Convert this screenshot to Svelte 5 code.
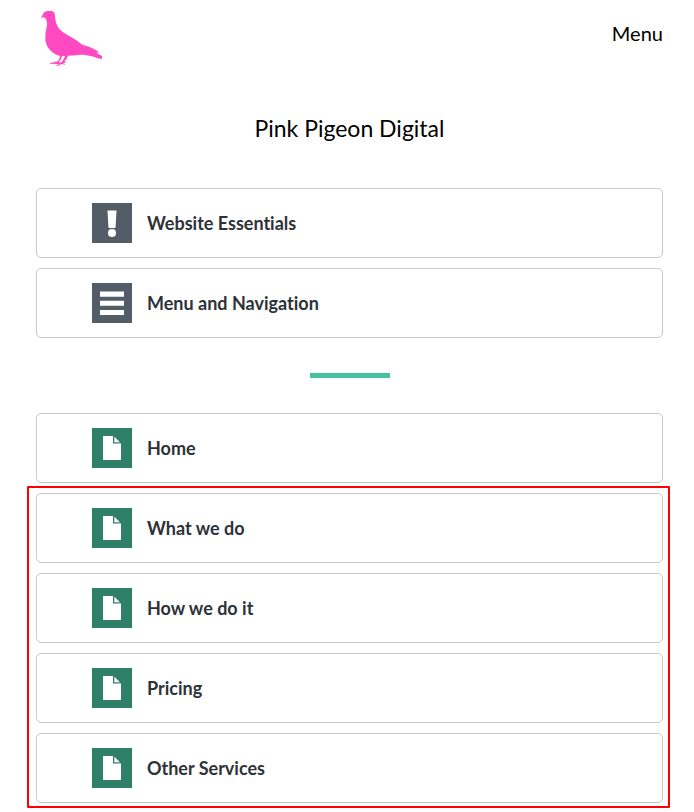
<script>
  const settings = [
    { label: 'Website Essentials', icon: 'alert' },
    { label: 'Menu and Navigation', icon: 'menu' }
  ];
  const home = [{ label: 'Home', icon: 'page' }];
  const pages = ['What we do', 'How we do it', 'Pricing', 'Other Services'].map((label) => ({
    label,
    icon: 'page'
  }));
</script>

{#snippet cards(items)}
  <ul>
    {#each items as item}
      <li>
        <a class="card" href="#top">
          <svg class="icon {item.icon}" viewBox="0 0 40 40" aria-hidden="true">
            {#if item.icon === 'alert'}
              <path d="M15.5 7.5h9L23.500 25h-7z" />
              <circle cx="20" cy="30" r="4" />
            {:else if item.icon === 'menu'}
              <path d="M8 8.500h24v5.200H8zM8 17.700h24v5H8zM8 27h24v5H8z" />
            {:else}
              <path d="M11.500 8H21v7.500h8V31.500q0 .5-.5.5h-17q-.5 0-.5-.5v-23q0-.5.5-.5z" />
              <path d="M22.300 8.700v5.500h5.700z" />
            {/if}
          </svg>
          <span>{item.label}</span>
        </a>
      </li>
    {/each}
  </ul>
{/snippet}

<div class="sheet" id="top">
  <header>
    <a class="logo" href="#top" aria-label="Pink Pigeon Digital">
      <svg viewBox="18 24 210 180" aria-hidden="true">
        <path
          d="M33 53 C36 48 37 47 39 43 C41 36 47 33 55 33 H65 C72 35 75 40 75 48 C76 61 78 72 84 81 C91 92 104 101 119 109 C132 116 143 123 151 130 C158 136 168 138 177 140 L196 149 L208 157 L199 158 L216 168 V177 L204 175 L186 169 L160 164 C145 164 130 166 114 167 C112 173 109 180 103 184 L108 189 L99 189 L107 195 L95 192 L85 197 L75 196 L90 192 L58 191 L63 188 L75 187 L67 185 L80 185 C86 181 90 175 90 168 C79 165 68 159 60 150 C50 140 45 126 46 108 C46 96 50 86 51 76 C51 66 50 59 45 53 C41 51 37 51 33 53 Z M96 168 C95 177 90 182 85 187 L95 187 C98 181 103 176 105 168 Z"
          fill-rule="evenodd"
        />
      </svg>
    </a>
    <button type="button">Menu</button>
  </header>

  <main>
    <h1>Pink Pigeon Digital</h1>
    {@render cards(settings)}
    <hr />
    {@render cards(home)}
    <section class="highlight" aria-label="Pages">
      {@render cards(pages)}
    </section>
  </main>
</div>

<style>
  :global(body) {
    margin: 0;
    background: #fff;
  }

  .sheet {
    padding: 8px 31px 9px 36px;
    font-family: Lato, sans-serif;
    font-variant-ligatures: none;
    color: #000;
  }

  header {
    display: flex;
    justify-content: space-between;
    align-items: flex-start;
  }

  .logo svg {
    display: block;
    width: 70px;
    height: 60px;
    fill: #ff49c2;
  }

  button {
    margin: 9px 0 0;
    padding: 0;
    border: 0;
    background: none;
    font: inherit;
    font-size: 20px;
    line-height: 32px;
    color: inherit;
    cursor: pointer;
  }

  h1 {
    margin: 44px 0;
    font-size: 23px;
    font-weight: 400;
    line-height: 32px;
    text-align: center;
  }

  ul {
    display: flex;
    flex-direction: column;
    gap: 10px;
    margin: 0;
    padding: 0;
    list-style: none;
  }

  .card {
    display: flex;
    align-items: center;
    gap: 15px;
    padding: 14px 55px;
    border: 1px solid #c8c8c8;
    border-radius: 5px;
    background: #fff;
    color: #2d3238;
    font-size: 18px;
    font-weight: 700;
    line-height: 24px;
    text-decoration: none;
  }

  .icon {
    flex: none;
    width: 40px;
    height: 40px;
    background: #535d68;
    fill: #fff;
  }

  .icon.page {
    background: #2e8168;
  }

  hr {
    width: 80px;
    height: 5px;
    margin: 35px auto;
    border: 0;
    background: #44c39d;
  }

  .highlight {
    position: relative;
    margin-top: 10px;
  }

  .highlight::after {
    content: '';
    position: absolute;
    inset: -7px -7px -5px -9px;
    border: 2px solid #f00;
    border-radius: 1px;
    pointer-events: none;
  }
</style>
